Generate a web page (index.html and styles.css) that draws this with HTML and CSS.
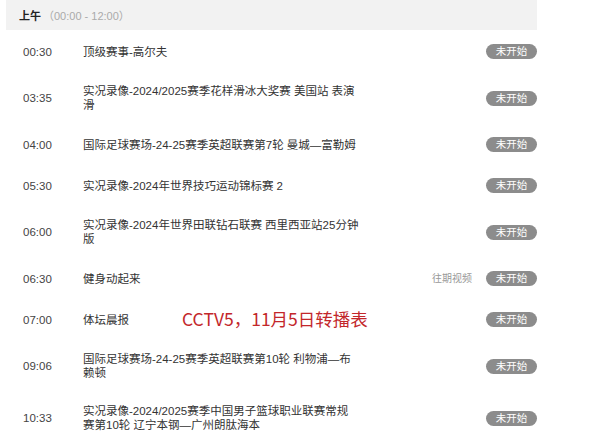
FILE: index.html
```html
<!DOCTYPE html>
<html lang="zh-CN">
<head>
<meta charset="utf-8">
<title>CCTV5 节目单</title>
<link rel="stylesheet" href="styles.css">
</head>
<body>
<div class="schedule">
  <div class="period">
    <span class="period-name">上午</span>
    <span class="period-range">（00:00 - 12:00）</span>
  </div>
  <ul class="list">
    <li class="row"><span class="time">00:30</span><span class="title">顶级赛事-高尔夫</span><span class="badge">未开始</span></li>
    <li class="row"><span class="time">03:35</span><span class="title">实况录像-2024/2025赛季花样滑冰大奖赛 美国站 表演滑</span><span class="badge">未开始</span></li>
    <li class="row"><span class="time">04:00</span><span class="title">国际足球赛场-24-25赛季英超联赛第7轮 曼城—富勒姆</span><span class="badge">未开始</span></li>
    <li class="row"><span class="time">05:30</span><span class="title">实况录像-2024年世界技巧运动锦标赛 2</span><span class="badge">未开始</span></li>
    <li class="row"><span class="time">06:00</span><span class="title">实况录像-2024年世界田联钻石联赛 西里西亚站25分钟版</span><span class="badge">未开始</span></li>
    <li class="row"><span class="time">06:30</span><span class="title">健身动起来</span><span class="past">往期视频</span><span class="badge">未开始</span></li>
    <li class="row"><span class="time">07:00</span><span class="title">体坛晨报</span><span class="badge">未开始</span></li>
    <li class="row"><span class="time">09:06</span><span class="title">国际足球赛场-24-25赛季英超联赛第10轮 利物浦—布<br>赖顿</span><span class="badge">未开始</span></li>
    <li class="row"><span class="time">10:33</span><span class="title">实况录像-2024/2025赛季中国男子篮球职业联赛常规<br>赛第10轮 辽宁本钢—广州朗肽海本</span><span class="badge">未开始</span></li>
  </ul>
  <div class="caption">CCTV5，11月5日转播表</div>
</div>
</body>
</html>
```
FILE: styles.css
```css
* { box-sizing: border-box; }
html, body { margin: 0; padding: 0; background: #fff; }
body {
  font-family: "Liberation Sans", "Noto Sans CJK SC", sans-serif;
  color: #333;
  overflow: hidden;
}
.schedule {
  position: relative;
  width: 531px;
  margin-left: 6px;
}
.period {
  height: 30px;
  background: #f2f2f2;
  display: flex;
  align-items: center;
  padding-left: 13px;
  font-size: 11px;
}
.period-name { font-weight: bold; color: #222; }
.period-range { color: #aaa; margin-left: 2px; }
.list { list-style: none; margin: 1px 0 0; padding: 0; }
.row {
  display: flex;
  align-items: center;
  min-height: 41px;
  padding: 12px 0;
  font-size: 11.5px;
  line-height: 14px;
}
.time {
  width: 77px;
  padding-left: 17px;
  color: #444;
  flex: none;
}
.title {
  width: 280px;
  flex: none;
  color: #333;
}
.past {
  margin-left: auto;
  margin-right: 14px;
  font-size: 10px;
  color: #999;
}
.badge {
  margin-left: auto;
  flex: none;
  width: 51px;
  height: 15px;
  line-height: 15px;
  border-radius: 8px;
  background: #8c8c8c;
  color: #fff;
  font-size: 10.5px;
  text-align: center;
}
.past + .badge { margin-left: 0; }
.caption {
  position: absolute;
  left: 176px;
  top: 307px;
  font-family: "Noto Sans CJK SC", sans-serif;
  font-size: 17.5px;
  line-height: 24px;
  color: #c3272b;
  white-space: nowrap;
}
```
